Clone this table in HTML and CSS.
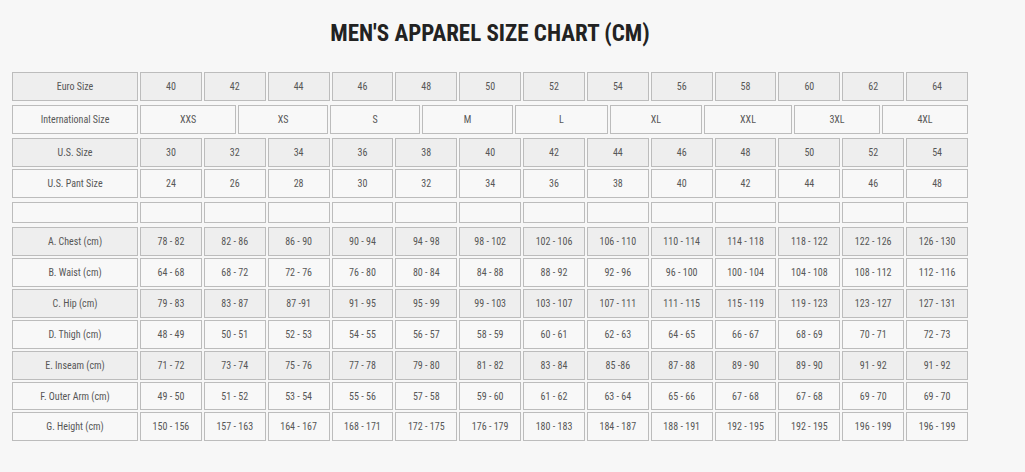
FILE: index.html
```html
<!DOCTYPE html>
<html lang="en">
<head>
<meta charset="utf-8">
<title>Men's Apparel Size Chart</title>
<link rel="stylesheet" href="styles.css">
</head>
<body>
<div class="chart">
  <h1 class="title">MEN'S APPAREL SIZE CHART (CM)</h1>

  <div class="row dark">
    <div class="cell label">Euro Size</div>
    <div class="cell">40</div><div class="cell">42</div><div class="cell">44</div><div class="cell">46</div><div class="cell">48</div><div class="cell">50</div><div class="cell">52</div><div class="cell">54</div><div class="cell">56</div><div class="cell">58</div><div class="cell">60</div><div class="cell">62</div><div class="cell">64</div>
  </div>

  <div class="row intl light gap4">
    <div class="cell label">International Size</div>
    <div class="cell">XXS</div><div class="cell">XS</div><div class="cell">S</div><div class="cell">M</div><div class="cell">L</div><div class="cell">XL</div><div class="cell">XXL</div><div class="cell">3XL</div><div class="cell">4XL</div>
  </div>

  <div class="row dark gap4">
    <div class="cell label">U.S. Size</div>
    <div class="cell">30</div><div class="cell">32</div><div class="cell">34</div><div class="cell">36</div><div class="cell">38</div><div class="cell">40</div><div class="cell">42</div><div class="cell">44</div><div class="cell">46</div><div class="cell">48</div><div class="cell">50</div><div class="cell">52</div><div class="cell">54</div>
  </div>

  <div class="row light">
    <div class="cell label">U.S. Pant Size</div>
    <div class="cell">24</div><div class="cell">26</div><div class="cell">28</div><div class="cell">30</div><div class="cell">32</div><div class="cell">34</div><div class="cell">36</div><div class="cell">38</div><div class="cell">40</div><div class="cell">42</div><div class="cell">44</div><div class="cell">46</div><div class="cell">48</div>
  </div>

  <div class="row light empty gap4">
    <div class="cell label"></div>
    <div class="cell"></div><div class="cell"></div><div class="cell"></div><div class="cell"></div><div class="cell"></div><div class="cell"></div><div class="cell"></div><div class="cell"></div><div class="cell"></div><div class="cell"></div><div class="cell"></div><div class="cell"></div><div class="cell"></div>
  </div>

  <div class="row dark gap4">
    <div class="cell label">A. Chest (cm)</div>
    <div class="cell">78 - 82</div><div class="cell">82 - 86</div><div class="cell">86 - 90</div><div class="cell">90 - 94</div><div class="cell">94 - 98</div><div class="cell">98 - 102</div><div class="cell">102 - 106</div><div class="cell">106 - 110</div><div class="cell">110 - 114</div><div class="cell">114 - 118</div><div class="cell">118 - 122</div><div class="cell">122 - 126</div><div class="cell">126 - 130</div>
  </div>

  <div class="row light">
    <div class="cell label">B. Waist (cm)</div>
    <div class="cell">64 - 68</div><div class="cell">68 - 72</div><div class="cell">72 - 76</div><div class="cell">76 - 80</div><div class="cell">80 - 84</div><div class="cell">84 - 88</div><div class="cell">88 - 92</div><div class="cell">92 - 96</div><div class="cell">96 - 100</div><div class="cell">100 - 104</div><div class="cell">104 - 108</div><div class="cell">108 - 112</div><div class="cell">112 - 116</div>
  </div>

  <div class="row dark">
    <div class="cell label">C. Hip (cm)</div>
    <div class="cell">79 - 83</div><div class="cell">83 - 87</div><div class="cell">87 -91</div><div class="cell">91 - 95</div><div class="cell">95 - 99</div><div class="cell">99 - 103</div><div class="cell">103 - 107</div><div class="cell">107 - 111</div><div class="cell">111 - 115</div><div class="cell">115 - 119</div><div class="cell">119 - 123</div><div class="cell">123 - 127</div><div class="cell">127 - 131</div>
  </div>

  <div class="row light">
    <div class="cell label">D. Thigh (cm)</div>
    <div class="cell">48 - 49</div><div class="cell">50 - 51</div><div class="cell">52 - 53</div><div class="cell">54 - 55</div><div class="cell">56 - 57</div><div class="cell">58 - 59</div><div class="cell">60 - 61</div><div class="cell">62 - 63</div><div class="cell">64 - 65</div><div class="cell">66 - 67</div><div class="cell">68 - 69</div><div class="cell">70 - 71</div><div class="cell">72 - 73</div>
  </div>

  <div class="row dark">
    <div class="cell label">E. Inseam (cm)</div>
    <div class="cell">71 - 72</div><div class="cell">73 - 74</div><div class="cell">75 - 76</div><div class="cell">77 - 78</div><div class="cell">79 - 80</div><div class="cell">81 - 82</div><div class="cell">83 - 84</div><div class="cell">85 -86</div><div class="cell">87 - 88</div><div class="cell">89 - 90</div><div class="cell">89 - 90</div><div class="cell">91 - 92</div><div class="cell">91 - 92</div>
  </div>

  <div class="row light short">
    <div class="cell label">F. Outer Arm (cm)</div>
    <div class="cell">49 - 50</div><div class="cell">51 - 52</div><div class="cell">53 - 54</div><div class="cell">55 - 56</div><div class="cell">57 - 58</div><div class="cell">59 - 60</div><div class="cell">61 - 62</div><div class="cell">63 - 64</div><div class="cell">65 - 66</div><div class="cell">67 - 68</div><div class="cell">67 - 68</div><div class="cell">69 - 70</div><div class="cell">69 - 70</div>
  </div>

  <div class="row light">
    <div class="cell label">G. Height (cm)</div>
    <div class="cell">150 - 156</div><div class="cell">157 - 163</div><div class="cell">164 - 167</div><div class="cell">168 - 171</div><div class="cell">172 - 175</div><div class="cell">176 - 179</div><div class="cell">180 - 183</div><div class="cell">184 - 187</div><div class="cell">188 - 191</div><div class="cell">192 - 195</div><div class="cell">192 - 195</div><div class="cell">196 - 199</div><div class="cell">196 - 199</div>
  </div>
</div>
</body>
</html>
```

FILE: styles.css
```css
html, body {
  margin: 0;
  padding: 0;
  background: #f7f7f7;
}

body {
  font-family: "Roboto", "Liberation Sans", sans-serif;
  color: #444;
}

.chart {
  width: 956px;
  margin: 0 0 0 12px;
  padding-top: 19px;
}

.title {
  margin: 0 0 23px 0;
  height: 30px;
  line-height: 30px;
  text-align: center;
  font-size: 23px;
  font-weight: 700;
  font-stretch: 87%;
  color: #222;
}

.row {
  display: grid;
  grid-template-columns: 126px repeat(13, 1fr);
  column-gap: 2px;
  margin-top: 2px;
  height: 29px;
}

.row.gap4 {
  margin-top: 4px;
}

.row.short {
  height: 28px;
}

.row.empty {
  height: 21px;
}

.row.intl {
  grid-template-columns: 126px 96px 90px 90px 91px 93px 92px 88px 86px 1fr;
}

.title + .row {
  margin-top: 0;
}

.cell {
  box-sizing: border-box;
  border: 1px solid #bcbcbc;
  display: flex;
  align-items: center;
  justify-content: center;
  font-size: 10px;
  font-stretch: 87%;
  color: #575757;
  white-space: nowrap;
}

.dark .cell {
  background: #eeeeee;
}

.light .cell {
  background: #f8f8f8;
}
```
